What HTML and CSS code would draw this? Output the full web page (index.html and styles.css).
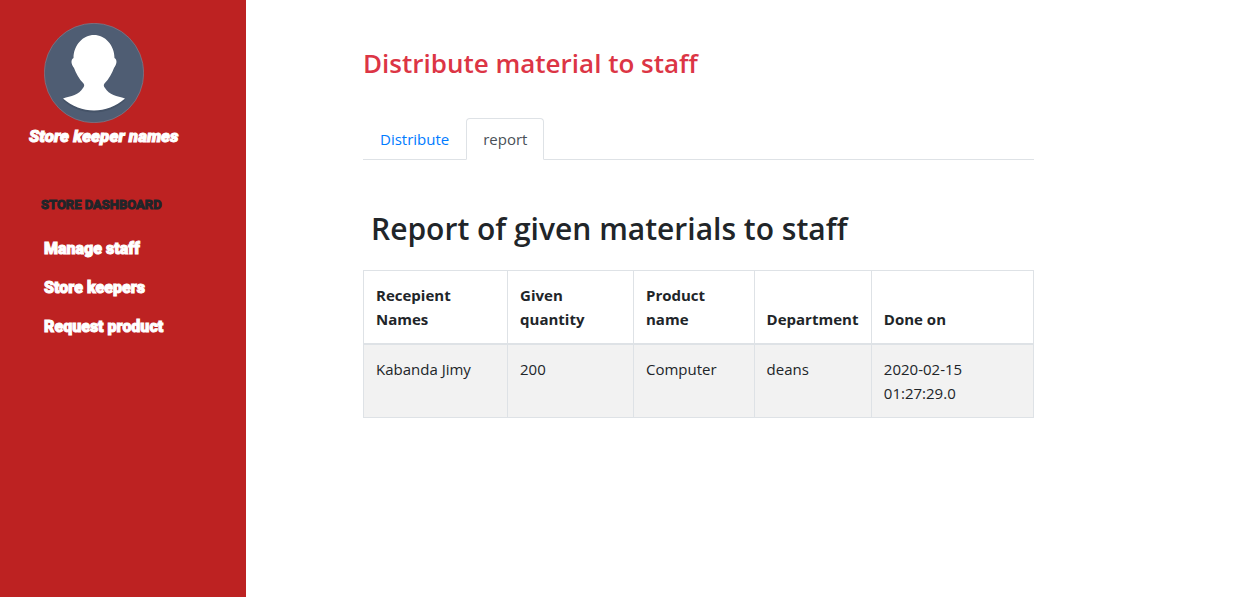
FILE: index.html
```html
<!DOCTYPE html>
<html lang="en">
<head>
<meta charset="utf-8">
<meta name="viewport" content="width=device-width, initial-scale=1">
<title>Store dashboard</title>
<link rel="stylesheet" href="styles.css">
</head>
<body>
<div class="layout">
  <aside class="sidebar">
    <div class="profile">
      <svg class="avatar" viewBox="0 0 100 100" role="img" aria-label="Profile picture">
        <circle cx="50" cy="50" r="49.7" fill="#4f5d73" stroke="#8b8390" stroke-width=".6"/>
        <path d="M19 77.500C27 75 34 74 39 66C41 63 40.500 61 38 59C34 54 32 49 30 46C27 43 26.500 38 29 35C29 22 39 12 50 12S71 22 71 35C73.500 38 73 43 70 46C68 49 66 54 62 59C59.500 61 59 63 61 66C66 74 73 75 81 77.500C63 93.500 37 93.500 19 77.500Z" fill="#39475c" opacity=".45"/>
        <path d="M19 75.500C27 73 35 72 39 65C40.500 63 40.500 62 39.500 60.500C35 56 32 50 30 45C27 41 26.500 37 29.500 35C29.500 22 39 12 50 12S70.500 22 70.500 35C73.500 37 73 41 70 45C68 50 65 56 60.500 60.500C59.500 62 59.500 63 61 65C65 72 73 73 81 75.500C63 91.500 37 91.500 19 75.500Z" fill="#fff"/>
      </svg>
      <div class="profile-name">Store keeper names</div>
    </div>
    <nav class="menu" aria-labelledby="menu-title">
      <h2 class="menu-title" id="menu-title">STORE DASHBOARD</h2>
      <a class="menu-link" href="#staff">Manage staff</a>
      <a class="menu-link" href="#keepers">Store keepers</a>
      <a class="menu-link" href="#request">Request product</a>
    </nav>
  </aside>
  <main class="main">
    <div class="content">
      <h1 class="page-title">Distribute material to staff</h1>
      <nav class="tabs" aria-label="Views">
        <a class="tab" href="#distribute">Distribute</a>
        <a class="tab tab-active" href="#report" aria-current="page">report</a>
      </nav>
      <section class="report" id="report">
        <h2 class="report-title">Report of given materials to staff</h2>
        <table class="table">
          <colgroup>
            <col class="col-name"><col class="col-quantity"><col class="col-product"><col class="col-department"><col class="col-date">
          </colgroup>
          <thead>
            <tr><th scope="col">Recepient<br>Names</th><th scope="col">Given<br>quantity</th><th scope="col">Product<br>name</th><th scope="col">Department</th><th scope="col">Done on</th></tr>
          </thead>
          <tbody>
            <tr><td>Kabanda Jimy</td><td>200</td><td>Computer</td><td>deans</td><td>2020-02-15<br>01:27:29.0</td></tr>
          </tbody>
        </table>
      </section>
    </div>
  </main>
</div>
</body>
</html>
```
FILE: styles.css
```css
* { box-sizing: border-box; }
body {
  margin: 0;
  background: #fff;
  color: #212529;
  font-family: "Segoe UI", "Open Sans", "Noto Sans", sans-serif;
  font-size: 15px;
  line-height: 24px;
}
h1, h2 { margin: 0; }
a { text-decoration: none; }
.layout { display: flex; min-height: 100vh; }
.sidebar {
  flex: 0 0 246px;
  padding-top: 23px;
  background: #bd2222;
  font-family: Impact, Roboto, "Liberation Sans", sans-serif;
  font-weight: 900;
}
.profile {
  display: flex;
  flex-direction: column;
  align-items: flex-start;
  padding-left: 29px;
}
.avatar { display: block; width: 100px; height: 100px; margin-left: 15px; }
.profile-name {
  color: #fff;
  font-size: 17px;
  line-height: 26px;
  font-style: italic;
  -webkit-text-stroke: 1px #fff;
}
.menu {
  display: flex;
  flex-direction: column;
  align-items: flex-start;
  gap: 15px;
  padding: 44px 0 0 44px;
}
.menu-title {
  margin: 0 0 5px -3px;
  font-size: 13px;
  line-height: 24px;
  -webkit-text-stroke: 1px #212529;
}
.menu-link { color: #fff; font-size: 16px; line-height: 24px; -webkit-text-stroke: 1px #fff; }
.main {
  flex: 1;
  display: grid;
  grid-template-columns: 117fr 671fr 205fr;
}
.content { grid-column: 2; min-width: 0; padding-top: 46px; }
.page-title {
  color: #dc3545;
  font-size: 26px;
  font-weight: 600;
  line-height: 34px;
}
.tabs {
  display: flex;
  margin-top: 38px;
  border-bottom: 1px solid #dee2e6;
}
.tab {
  margin-bottom: -1px;
  padding: 8px 16px;
  border: 1px solid transparent;
  border-radius: 4px 4px 0 0;
  color: #007bff;
}
.tab-active {
  border-color: #dee2e6 #dee2e6 #fff;
  background: #fff;
  color: #495057;
}
.report { padding-top: 50px; }
.report-title {
  padding-left: 8px;
  font-size: 30px;
  font-weight: 600;
  line-height: 38px;
}
.table {
  width: 100%;
  margin-top: 22px;
  border-collapse: collapse;
  table-layout: fixed;
}
.col-name { width: 21.5%; }
.col-quantity { width: 18.8%; }
.col-product { width: 18%; }
.col-department { width: 17.5%; }
.col-date { width: 24.2%; }
.table th, .table td {
  padding: 12px;
  border: 1px solid #dee2e6;
  text-align: left;
  vertical-align: top;
}
.table th { border-bottom-width: 2px; font-weight: 700; vertical-align: bottom; }
.table td { background: #f2f2f2; }
```
